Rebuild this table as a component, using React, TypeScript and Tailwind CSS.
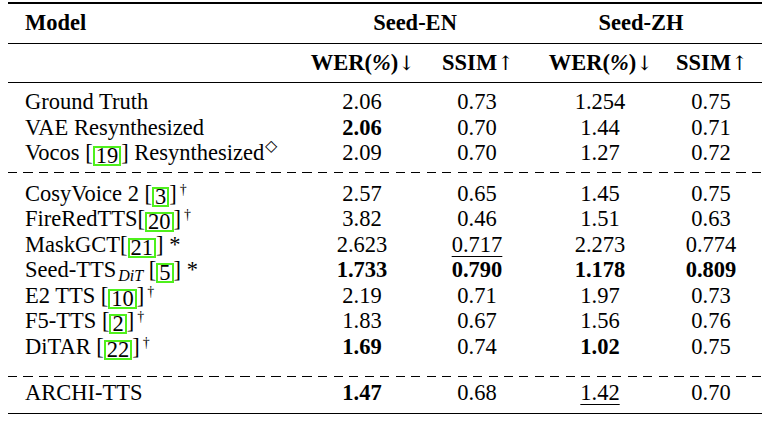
import React from "react";

type Cell = { v: string; b?: boolean; u?: boolean };
type Row = { name: React.ReactNode; cells: Cell[] };

function Cite({ n }: { n: string }) {
  return (
    <>
      [
      <span className="inline-block border-2 border-[#4ff01c] px-[1px] leading-[16px] align-[-3px]">
        {n}
      </span>
      ]
    </>
  );
}

function Dag() {
  return <sup className="ml-[3px] text-[14px]">†</sup>;
}

function Arrow({ up }: { up?: boolean }) {
  return (
    <span className="font-['DejaVu_Serif',serif] text-[20px] font-normal tracking-[-2px] text-black">
      {up ? "↑" : "↓"}
    </span>
  );
}

const c = (v: string, b = false, u = false): Cell => ({ v, b, u });

const group1: Row[] = [
  { name: "Ground Truth", cells: [c("2.06"), c("0.73"), c("1.254"), c("0.75")] },
  { name: "VAE Resynthesized", cells: [c("2.06", true), c("0.70"), c("1.44"), c("0.71")] },
  {
    name: (
      <>
        Vocos <Cite n="19" /> Resynthesized
        <sup className="ml-[1px] -top-[9px] text-[16px]">◇</sup>
      </>
    ),
    cells: [c("2.09"), c("0.70"), c("1.27"), c("0.72")],
  },
];

const group2: Row[] = [
  {
    name: (
      <>
        CosyVoice 2 <Cite n="3" />
        <Dag />
      </>
    ),
    cells: [c("2.57"), c("0.65"), c("1.45"), c("0.75")],
  },
  {
    name: (
      <>
        FireRedTTS
        <Cite n="20" />
        <Dag />
      </>
    ),
    cells: [c("3.82"), c("0.46"), c("1.51"), c("0.63")],
  },
  {
    name: (
      <>
        MaskGCT
        <Cite n="21" /> *
      </>
    ),
    cells: [c("2.623"), c("0.717", false, true), c("2.273"), c("0.774")],
  },
  {
    name: (
      <>
        Seed-TTS
        <sub className="ml-[2px] -bottom-[4px] text-[16px] italic">DiT</sub> <Cite n="5" /> *
      </>
    ),
    cells: [c("1.733", true), c("0.790", true), c("1.178", true), c("0.809", true)],
  },
  {
    name: (
      <>
        E2 TTS <Cite n="10" />
        <Dag />
      </>
    ),
    cells: [c("2.19"), c("0.71"), c("1.97"), c("0.73")],
  },
  {
    name: (
      <>
        F5-TTS <Cite n="2" />
        <Dag />
      </>
    ),
    cells: [c("1.83"), c("0.67"), c("1.56"), c("0.76")],
  },
  {
    name: (
      <>
        DiTAR <Cite n="22" />
        <Dag />
      </>
    ),
    cells: [c("1.69", true), c("0.74"), c("1.02", true), c("0.75")],
  },
];

const group3: Row[] = [
  { name: "ARCHI-TTS", cells: [c("1.47", true), c("0.68"), c("1.42", false, true), c("0.70")] },
];

const cols = "grid grid-cols-[292px_124px_106px_140px_82px]";

function DataRow({ r }: { r: Row }) {
  return (
    <div className={`${cols} h-[25.5px] items-center leading-[25.5px]`}>
      <div className="whitespace-nowrap pl-[17px]">{r.name}</div>
      {r.cells.map((x, i) => (
        <div key={i} className="text-center">
          <span
            className={`${x.b ? "font-bold" : ""} ${
              x.u ? "underline decoration-1 underline-offset-[4px]" : ""
            }`}
          >
            {x.v}
          </span>
        </div>
      ))}
    </div>
  );
}

function Dashed() {
  return (
    <div className="h-px bg-[repeating-linear-gradient(to_right,#000_0_9px,transparent_9px_15.5px)]" />
  );
}

export default function App() {
  return (
    <div className="h-[425px] w-[770px] bg-white px-[8px] pt-[2px] font-['Liberation_Serif',serif] text-[22.5px] text-black">
      <div className="h-[1.6px] bg-black" />
      <div className={`${cols} h-[39.5px] items-center font-bold`}>
        <div className="pl-[17px]">Model</div>
        <div className="col-span-2 text-center">Seed-EN</div>
        <div className="col-span-2 text-center">Seed-ZH</div>
      </div>
      <div className="h-px bg-black" />
      <div className={`${cols} h-[38px] items-center font-bold`}>
        <div />
        <div className="text-center">
          WER(<span className="italic">%</span>)
          <Arrow />
        </div>
        <div className="text-center">
          SSIM
          <Arrow up />
        </div>
        <div className="text-center">
          WER(<span className="italic">%</span>)
          <Arrow />
        </div>
        <div className="text-center">
          SSIM
          <Arrow up />
        </div>
      </div>
      <div className="h-px bg-black" />
      <div className="pb-[6px] pt-[6px]">
        {group1.map((r, i) => (
          <DataRow key={i} r={r} />
        ))}
      </div>
      <Dashed />
      <div className="pb-[17px] pt-[8px]">
        {group2.map((r, i) => (
          <DataRow key={i} r={r} />
        ))}
      </div>
      <Dashed />
      <div className="pb-[7px] pt-[3px]">
        {group3.map((r, i) => (
          <DataRow key={i} r={r} />
        ))}
      </div>
      <div className="h-[1.6px] bg-black" />
    </div>
  );
}
